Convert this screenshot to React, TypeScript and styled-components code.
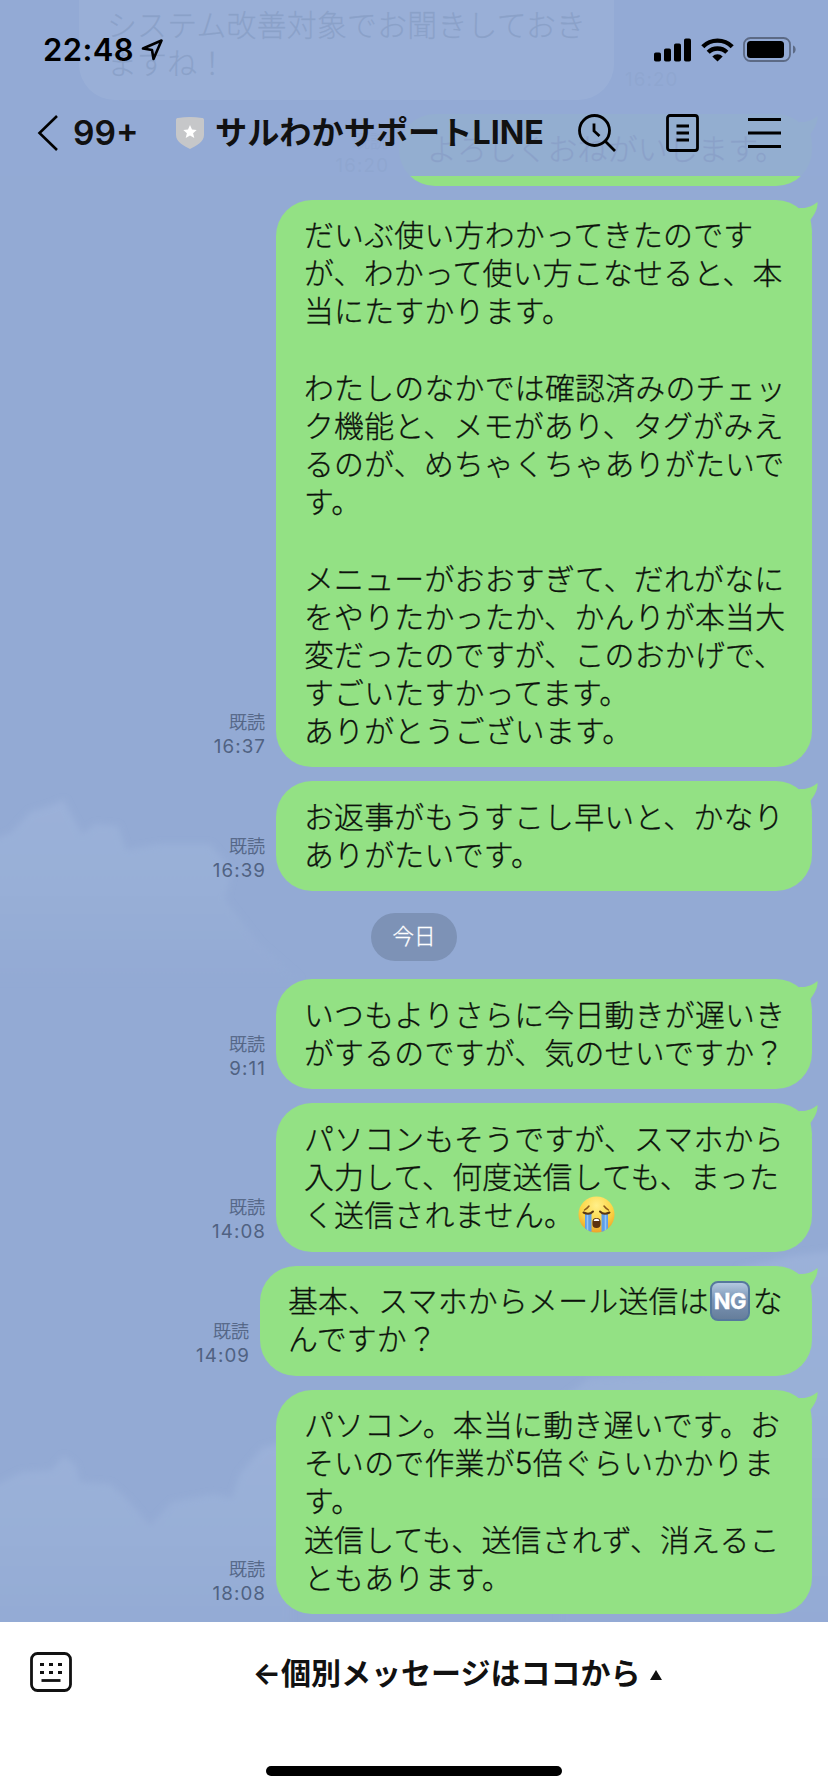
import React from "react";
import styled, { createGlobalStyle } from "styled-components";

const GlobalStyle = createGlobalStyle`
  * { box-sizing: border-box; }
  html, body { margin: 0; padding: 0; }
  body { font-family: Inter, "Noto Sans CJK JP", sans-serif; color: #0d120c; }
`;

const Screen = styled.div`
  position: relative;
  display: flex;
  flex-direction: column;
  width: 828px;
  height: 1792px;
  overflow: hidden;
  background: #fff;
`;

const Chat = styled.main`
  position: relative;
  display: flex;
  flex-direction: column;
  justify-content: flex-end;
  gap: 14px;
  height: 1622px;
  padding: 0 16px 8px;
  overflow: hidden;
  background: #93aad4;
`;

const Sky = styled.svg`
  position: absolute;
  inset: 0;
`;

const Row = styled.div<{ $received?: boolean }>`
  position: relative;
  display: flex;
  flex: none;
  flex-direction: ${(p) => (p.$received ? "row-reverse" : "row")};
  justify-content: flex-end;
  align-items: flex-end;
  gap: 11px;
  padding-left: ${(p) => (p.$received ? "63px" : "0")};
`;

const Bubble = styled.div<{ $received?: boolean; $width: number }>`
  position: relative;
  width: ${(p) => p.$width}px;
  padding: 16.6px 0 17.1px 28px;
  border-radius: 36px;
  background: ${(p) => (p.$received ? "#fff" : "#93e184")};
  font-size: 29.87px;
  font-weight: 300;
  line-height: 38.165px;
  letter-spacing: 0.26px;
  white-space: pre;
  -webkit-text-stroke: 0.3px currentColor;
`;

const Line = styled.div`
  height: 38.165px;
`;

const TailShape = styled.svg`
  position: absolute;
  top: 0;
  right: -6px;
`;

const Meta = styled.div<{ $received?: boolean }>`
  padding-bottom: 8px;
  color: #506282;
  font-size: 18px;
  line-height: 24px;
  text-align: ${(p) => (p.$received ? "left" : "right")};
`;

const Read = styled.div`
  font-weight: 300;
  -webkit-text-stroke: 0.25px currentColor;
`;

const Time = styled.div`
  font-size: 18.8px;
  letter-spacing: 1.1px;
  margin-right: -1.1px;
`;

const DateChip = styled.div`
  position: relative;
  align-self: center;
  flex: none;
  width: 86px;
  height: 48px;
  margin: 8px 0 4px;
  border-radius: 24px;
  background: #7d92b6;
  color: #fff;
  font-size: 21.5px;
  font-weight: 300;
  line-height: 47px;
  text-align: center;
  -webkit-text-stroke: 0.3px currentColor;
`;

const EmojiIcon = styled.svg`
  display: inline-block;
  margin: 0 0 0 4px;
  vertical-align: -7px;
`;

const NgBadge = styled.span`
  display: inline-block;
  width: 40px;
  height: 40px;
  margin: -4px 3px 0 1px;
  border: 2px solid #56789d;
  border-radius: 8px;
  background: linear-gradient(#b4c9e0, #7b95b6 45%, #667e9b);
  color: #fff;
  font-size: 22px;
  font-weight: 700;
  line-height: 37px;
  letter-spacing: -0.5px;
  text-align: center;
  vertical-align: 3px;
`;

const Header = styled.header`
  position: absolute;
  inset: 0 0 auto 0;
  display: flex;
  flex-direction: column;
  height: 176px;
  background: rgba(147, 170, 212, 0.94);
  color: #111;
`;

const StatusBar = styled.div`
  display: flex;
  align-items: center;
  height: 88px;
  padding: 11px 31px 0 43px;
`;

const Clock = styled.span`
  color: #000;
  font-size: 31px;
  font-weight: 600;
  letter-spacing: 0.4px;
  width: 98px;
`;

const StatusIcons = styled.div`
  display: flex;
  align-items: center;
  gap: 9px;
  margin-left: auto;
`;

const NavBar = styled.nav`
  display: flex;
  align-items: center;
  height: 88px;
  padding: 1px 47px 0 37px;
`;

const Unread = styled.span`
  width: 103px;
  margin-left: 14px;
  font-size: 33.6px;
  font-weight: 600;
`;

const Title = styled.h1`
  flex: none;
  width: 346px;
  margin: 0 0 0 11px;
  font-size: 32.2px;
  font-weight: 700;
  line-height: 44px;
  white-space: nowrap;
`;

const NavIcons = styled.div`
  display: flex;
  align-items: center;
  gap: 49px;
  margin-left: auto;
`;

const Footer = styled.footer`
  display: flex;
  flex-direction: column;
  align-items: center;
  justify-content: space-between;
  height: 170px;
  padding-bottom: 16px;
  background: #fff;
`;

const MenuBar = styled.div`
  display: flex;
  align-items: center;
  width: 100%;
  height: 99px;
  padding-left: 30px;
`;

const MenuLabel = styled.div`
  flex: 1;
  display: flex;
  align-items: center;
  justify-content: center;
  gap: 9px;
  padding: 0 0 2px 14px;
  color: #111;
  font-size: 30px;
  font-weight: 700;
  white-space: nowrap;
`;

const Caret = styled.svg`
  margin-top: 9px;
`;

const HomeIndicator = styled.div`
  width: 296px;
  height: 10px;
  border-radius: 5px;
  background: #000;
`;

const Tail = () => (
  <TailShape width="42" height="34" viewBox="0 0 42 34">
    <path d="M20 9L24 8C30 8.500 37 6 41.500 2C42 9 38 15 34.500 20C35.200 23 35.800 27 36 34H20Z" fill="#93e184" />
  </TailShape>
);

const CryingFace = () => (
  <EmojiIcon width="37" height="37" viewBox="0 0 37 37">
    <defs>
      <radialGradient id="face" cx="50%" cy="25%" r="75%">
        <stop offset="0" stopColor="#fff08a" />
        <stop offset="0.600" stopColor="#fcd545" />
        <stop offset="1" stopColor="#eda32b" />
      </radialGradient>
      <clipPath id="faceClip"><circle cx="18.500" cy="18.500" r="18" /></clipPath>
    </defs>
    <circle cx="18.500" cy="18.500" r="18" fill="url(#face)" />
    <path d="M6.500 14C8 13 10 11.500 11 10M30.500 14C29 13 27 11.500 26 10" fill="none" stroke="#8a5a1c" strokeWidth="1.500" strokeLinecap="round" />
    <g clipPath="url(#faceClip)">
      <path d="M7 17h6.500v20H7zM23.500 17H30v20h-6.500z" fill="#5f9fe8" />
      <path d="M9.500 18v19M27.500 18v19" stroke="#93c6f7" strokeWidth="1.600" />
    </g>
    <path d="M5.500 16.500c3 1.500 7 1.500 9.500-1M31.500 16.500c-3 1.500-7 1.500-9.500-1" fill="none" stroke="#5c3912" strokeWidth="2" strokeLinecap="round" />
    <rect x="14.400" y="22" width="8.200" height="10" rx="4" fill="#5d3211" />
    <path d="M15.700 25c0-3 5.600-3 5.600 0z" fill="#fff" />
  </EmojiIcon>
);

type MessageData = {
  lines: React.ReactNode[];
  time: string;
  width: number;
  received?: boolean;
};

const earlier: MessageData[] = [
  { received: true, width: 535, time: "16:20", lines: ["", "システム改善対象でお聞きしておき", "ますね！"] },
  { width: 413, time: "16:20", lines: ["よろしくおねがいします。"] },
  {
    width: 536,
    time: "16:37",
    lines: [
      "だいぶ使い方わかってきたのです",
      "が、わかって使い方こなせると、本",
      "当にたすかります。",
      "",
      "わたしのなかでは確認済みのチェッ",
      "ク機能と、メモがあり、タグがみえ",
      "るのが、めちゃくちゃありがたいで",
      "す。",
      "",
      "メニューがおおすぎて、だれがなに",
      "をやりたかったか、かんりが本当大",
      "変だったのですが、このおかげで、",
      "すごいたすかってます。",
      "ありがとうございます。",
    ],
  },
  { width: 536, time: "16:39", lines: ["お返事がもうすこし早いと、かなり", "ありがたいです。"] },
];

const today: MessageData[] = [
  { width: 536, time: "9:11", lines: ["いつもよりさらに今日動きが遅いき", "がするのですが、気のせいですか？"] },
  {
    width: 536,
    time: "14:08",
    lines: [
      "パソコンもそうですが、スマホから",
      "入力して、何度送信しても、まった",
      <>く送信されません。<CryingFace /></>,
    ],
  },
  {
    width: 552,
    time: "14:09",
    lines: [<>基本、スマホからメール送信は<NgBadge>NG</NgBadge>な</>, "んですか？"],
  },
  {
    width: 536,
    time: "18:08",
    lines: ["パソコン。本当に動き遅いです。お", "そいので作業が5倍ぐらいかかりま", "す。", "送信しても、送信されず、消えるこ", "ともあります。"],
  },
];

const Message = ({ lines, time, width, received }: MessageData) => (
  <Row $received={received}>
    <Meta $received={received}>
      {!received && <Read>既読</Read>}
      <Time>{time}</Time>
    </Meta>
    <Bubble $received={received} $width={width}>
      {lines.map((line, i) => (
        <Line key={i}>{line}</Line>
      ))}
      {!received && <Tail />}
    </Bubble>
  </Row>
);

const Clouds = () => (
  <Sky width="828" height="1622" viewBox="0 0 828 1622">
    <defs>
      <linearGradient id="cloud" x1="0" y1="0" x2="0" y2="1">
        <stop offset="0" stopColor="#9bb1d9" />
        <stop offset="0.500" stopColor="#98afd7" />
        <stop offset="1" stopColor="#93aad4" />
      </linearGradient>
      <filter id="soft"><feGaussianBlur stdDeviation="3" /></filter>
    </defs>
    <g fill="url(#cloud)" filter="url(#soft)">
      <path d="M-10 842L12 832L30 812L50 806L64 800L70 812L82 834L96 824L118 826L126 850L160 844L210 844L232 870L225 900L260 945L300 980H-10Z" />
      <path d="M-10 1488L22 1472L52 1470L64 1456L76 1466L80 1482L110 1484L128 1500L150 1526L172 1502L214 1494L232 1498L240 1474L262 1448L290 1440V1640H-10Z" />
      <path d="M560 1400L590 1378L700 1374L740 1268L790 1256L840 1250V1640H560Z" />
    </g>
  </Sky>
);

const App = () => (
  <>
    <GlobalStyle />
    <Screen>
      <Chat>
        <Clouds />
        {earlier.map((m, i) => (
          <Message key={i} {...m} />
        ))}
        <DateChip>今日</DateChip>
        {today.map((m, i) => (
          <Message key={i} {...m} />
        ))}
      </Chat>
      <Header>
        <StatusBar>
          <Clock>22:48</Clock>
          <svg width="23" height="22" viewBox="0 0 23 22" fill="none" stroke="#000" strokeWidth="2.600" strokeLinejoin="round">
            <path d="M2 9.500L20.500 1.500L12.500 20L11 11Z" />
          </svg>
          <StatusIcons>
            <svg width="38" height="24" viewBox="0 0 38 24">
              <rect x="0" y="14.500" width="7" height="9" rx="1.800" />
              <rect x="10" y="10.500" width="7" height="13" rx="1.800" />
              <rect x="20" y="5.500" width="7" height="18" rx="1.800" />
              <rect x="30" y="0.500" width="7" height="23" rx="1.800" />
            </svg>
            <svg width="33" height="24" viewBox="0 0 33 24" fill="none" stroke="#000" strokeWidth="4.400">
              <path d="M1.800 8.700a20.800 20.800 0 0 1 29.400 0" />
              <path d="M7.200 14.300a13.200 13.200 0 0 1 18.600 0" />
              <path d="M16.500 23.500l-5.200-5a7.400 7.400 0 0 1 10.400 0z" fill="#000" stroke="none" />
            </svg>
            <svg width="54" height="25" viewBox="0 0 54 25">
              <rect x="1" y="1" width="46" height="23" rx="6.500" fill="none" stroke="#5c6a85" strokeWidth="1.800" />
              <rect x="4" y="4" width="37" height="17" rx="3.500" />
              <path d="M50 8.500c3.500 1 3.500 7 0 8z" fill="#5c6a85" />
            </svg>
          </StatusIcons>
        </StatusBar>
        <NavBar>
          <svg width="22" height="36" viewBox="0 0 22 36" fill="none" stroke="#000" strokeWidth="2.600">
            <path d="M20 1L2.500 18L20 35" />
          </svg>
          <Unread>99+</Unread>
          <svg width="28" height="32" viewBox="0 0 28 32">
            <path d="M0 3C0 1.500 1 1 2 1Q14-1 26 1C27 1 28 1.500 28 3V18C28 25 20 29 14 32C8 29 0 25 0 18Z" fill="#c6c7c9" />
            <path d="M14 8l2 4.600 4.700.4-3.600 3.200 1.200 4.800-4.300-2.600-4.300 2.600 1.200-4.800L7.300 13l4.700-.4z" fill="#fff" />
          </svg>
          <Title>サルわかサポートLINE</Title>
          <NavIcons>
            <svg width="40" height="40" viewBox="0 0 40 40" fill="none" stroke="#000" strokeWidth="2.800">
              <circle cx="17.500" cy="17.500" r="15" />
              <path d="M28 28L38 38M17 10.500V18L22.500 23" />
            </svg>
            <svg width="33" height="38" viewBox="0 0 33 38" fill="none" stroke="#000" strokeWidth="2.800">
              <rect x="1.500" y="1.500" width="30" height="35" rx="2.500" />
              <path d="M10.500 12H23M10.500 19H23M10.500 26H23" />
            </svg>
            <svg width="33" height="32" viewBox="0 0 33 32" stroke="#000" strokeWidth="2.800">
              <path d="M0 2.500H33M0 16H33M0 29.500H33" />
            </svg>
          </NavIcons>
        </NavBar>
      </Header>
      <Footer>
        <MenuBar>
          <svg width="42" height="40" viewBox="0 0 42 40">
            <rect x="1.500" y="1.500" width="39" height="37" rx="6" fill="none" stroke="#111" strokeWidth="2.800" />
            <path d="M10 12.500h4M19 12.500h4M28 12.500h4M10 20.500h4M19 20.500h4M28 20.500h4" stroke="#111" strokeWidth="3.200" />
            <path d="M11.500 28.500h19" stroke="#111" strokeWidth="2.800" />
          </svg>
          <MenuLabel>
            <span>←個別メッセージはココから</span>
            <Caret width="12" height="10" viewBox="0 0 12 10"><path d="M6 0L12 10H0Z" fill="#111" /></Caret>
          </MenuLabel>
        </MenuBar>
        <HomeIndicator />
      </Footer>
    </Screen>
  </>
);

export default App;
